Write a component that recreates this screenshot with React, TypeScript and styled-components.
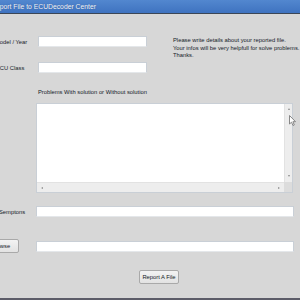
import React from 'react';
import styled, { createGlobalStyle } from 'styled-components';

const GlobalStyle = createGlobalStyle`
  html, body {
    margin: 0;
    padding: 0;
    background: #d6d6d6;
  }
  body {
    font-family: 'Liberation Sans', Arial, sans-serif;
    overflow: hidden;
  }
`;

const Viewport = styled('div')`
  width: 300px;
  height: 300px;
  overflow: hidden;
  position: relative;
`;

const Window = styled('div')`
  width: 316px;
  height: 300px;
  margin-left: -16px;
  display: flex;
  flex-direction: column;
  background: #d7d7d7;
  border-bottom: 2px solid #5c5c68;
  box-sizing: border-box;
`;

const TitleBar = styled('div')`
  height: 13px;
  flex: none;
  display: flex;
  align-items: center;
  padding-left: 7px;
  background: linear-gradient(#5287cf, #3f73c0);
  border-bottom: 1px solid #3b4656;
  color: #f4f7fc;
  font-size: 6.8px;
  text-shadow: 0 0 1px rgba(20, 40, 90, 0.5);
`;

const Body = styled('div')`
  flex: 1;
  display: flex;
  flex-direction: column;
  padding-top: 22px;
  color: #141a28;
  font-size: 5.8px;
`;

const TopSection = styled('div')`
  display: flex;
`;

const Fields = styled('div')`
  display: flex;
  flex-direction: column;
  gap: 15px;
`;

const Row = styled('div')<{ $gap?: number }>`
  display: flex;
  align-items: center;
  margin-top: ${({ $gap = 0 }) => $gap}px;
`;

const Label = styled('div')<{ $width: number; $indent: number }>`
  width: ${({ $width }) => $width}px;
  padding-left: ${({ $indent }) => $indent}px;
  box-sizing: border-box;
  flex: none;
  white-space: nowrap;
`;

const TextBox = styled('div')<{ $width: number; $height?: number }>`
  width: ${({ $width }) => $width}px;
  height: ${({ $height = 11 }) => $height}px;
  background: #ffffff;
  border: 1px solid #c9cfd6;
  border-bottom-color: #e4e7ea;
  box-sizing: border-box;
  flex: none;
`;

const Info = styled('div')`
  margin-left: 26px;
  margin-top: 1px;
  line-height: 7.6px;
  white-space: nowrap;
`;

const Caption = styled('div')`
  margin: 16px 0 0 54px;
  height: 7px;
  line-height: 7px;
`;

const Memo = styled('div')`
  margin: 7px 0 0 52px;
  width: 257px;
  height: 90px;
  display: grid;
  grid-template-columns: 1fr 8px;
  grid-template-rows: 1fr 10px;
  background: #ffffff;
  border: 1px solid #c9cfd6;
  box-sizing: border-box;
  position: relative;
`;

const VScroll = styled('div')`
  background: #ededed;
  border-left: 1px solid #e2e2e2;
  display: flex;
  flex-direction: column;
  justify-content: space-between;
  align-items: center;
  padding: 4px 0 5px;
`;

const HScroll = styled('div')`
  background: #ededed;
  border-top: 1px solid #e2e2e2;
  display: flex;
  justify-content: space-between;
  align-items: center;
  padding: 0 4px 0 4px;
`;

const Corner = styled('div')`
  background: #dcdcdc;
`;

const Arrow = styled('span')<{ $dir: 'up' | 'down' | 'left' | 'right' }>`
  width: 0;
  height: 0;
  border: 1.5px solid transparent;
  ${({ $dir }) =>
    $dir === 'up'
      ? 'border-bottom: 2px solid #8a8a8a; border-top-width: 0;'
      : $dir === 'down'
      ? 'border-top: 2px solid #8a8a8a; border-bottom-width: 0;'
      : $dir === 'left'
      ? 'border-right: 2px solid #8a8a8a; border-left-width: 0;'
      : 'border-left: 2px solid #8a8a8a; border-right-width: 0;'}
`;

const Cursor = styled('svg')`
  position: absolute;
  right: -4px;
  top: 11px;
`;

const Button = styled('div')<{ $width: number; $offset?: number }>`
  width: ${({ $width }) => $width}px;
  margin-left: ${({ $offset = 0 }) => $offset}px;
  height: 14px;
  box-sizing: border-box;
  flex: none;
  display: flex;
  align-items: center;
  justify-content: center;
  background: linear-gradient(#f3f3f3, #e2e2e2);
  border: 1px solid #a9a9a9;
  border-radius: 2px;
  color: #141a28;
  font-size: 5.8px;
  white-space: nowrap;
`;

const Footer = styled('div')`
  display: flex;
  margin-top: 17px;
  padding-left: 155px;
`;

export default function App() {
  return (
    <Viewport>
      <GlobalStyle />
      <Window>
        <TitleBar>Report File to ECUDecoder Center</TitleBar>
        <Body>
          <TopSection>
            <Fields>
              <Row>
                <Label $width={54} $indent={11}>Model / Year</Label>
                <TextBox $width={109} />
              </Row>
              <Row>
                <Label $width={54} $indent={12}>ECU Class</Label>
                <TextBox $width={109} $height={11} />
              </Row>
            </Fields>
            <Info>
              Please write details about your reported file.
              <br />
              Your infos will be very helpfull for solve problems.
              <br />
              Thanks.
            </Info>
          </TopSection>

          <Caption>Problems With solution or Without solution</Caption>
          <Memo>
            <div />
            <VScroll>
              <Arrow $dir="up" />
              <Arrow $dir="down" />
            </VScroll>
            <HScroll>
              <Arrow $dir="left" />
              <Arrow $dir="right" />
            </HScroll>
            <Corner />
            <Cursor width="7" height="11" viewBox="0 0 7 11">
              <path
                d="M0.5 0.5 L0.5 9 L2.5 7.2 L4 10.5 L5.3 9.9 L3.9 6.7 L6.5 6.7 Z"
                fill="#ffffff"
                stroke="#7a7a7a"
                strokeWidth="0.9"
                strokeLinejoin="round"
              />
            </Cursor>
          </Memo>

          <Row $gap={13}>
            <Label $width={52} $indent={15}>Semptons</Label>
            <TextBox $width={258} />
          </Row>

          <Row $gap={22}>
            <Label $width={52} $indent={0}>
              <Button $width={37} $offset={-2}>Browse</Button>
            </Label>
            <TextBox $width={258} />
          </Row>

          <Footer>
            <Button $width={40}>Report A File</Button>
          </Footer>
        </Body>
      </Window>
    </Viewport>
  );
}
